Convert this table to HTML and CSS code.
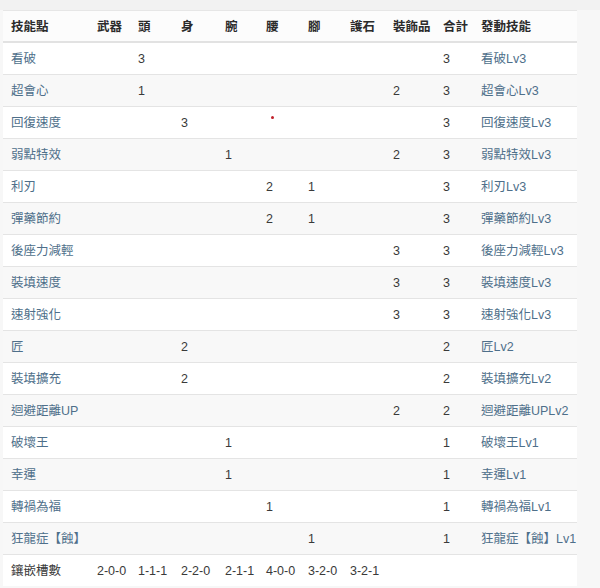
FILE: index.html
```html
<!DOCTYPE html>
<html lang="zh-Hant">
<head>
<meta charset="utf-8">
<title>技能點</title>
<link rel="stylesheet" href="styles.css">
</head>
<body>
<div class="page">
  <table class="skills">
    <colgroup>
      <col class="c-name"><col class="c-w"><col class="c-h"><col class="c-b"><col class="c-a"><col class="c-wa"><col class="c-l"><col class="c-ch"><col class="c-d"><col class="c-t"><col class="c-s">
    </colgroup>
    <thead>
      <tr><th>技能點</th><th>武器</th><th>頭</th><th>身</th><th>腕</th><th>腰</th><th>腳</th><th>護石</th><th>裝飾品</th><th>合計</th><th>發動技能</th></tr>
    </thead>
    <tbody>
      <tr><td class="lnk">看破</td><td></td><td>3</td><td></td><td></td><td></td><td></td><td></td><td></td><td>3</td><td class="lnk">看破Lv3</td></tr>
      <tr><td class="lnk">超會心</td><td></td><td>1</td><td></td><td></td><td></td><td></td><td></td><td>2</td><td>3</td><td class="lnk">超會心Lv3</td></tr>
      <tr><td class="lnk">回復速度</td><td></td><td></td><td>3</td><td></td><td class="dotcell"><span class="dot"></span></td><td></td><td></td><td></td><td>3</td><td class="lnk">回復速度Lv3</td></tr>
      <tr><td class="lnk">弱點特效</td><td></td><td></td><td></td><td>1</td><td></td><td></td><td></td><td>2</td><td>3</td><td class="lnk">弱點特效Lv3</td></tr>
      <tr><td class="lnk">利刃</td><td></td><td></td><td></td><td></td><td>2</td><td>1</td><td></td><td></td><td>3</td><td class="lnk">利刃Lv3</td></tr>
      <tr><td class="lnk">彈藥節約</td><td></td><td></td><td></td><td></td><td>2</td><td>1</td><td></td><td></td><td>3</td><td class="lnk">彈藥節約Lv3</td></tr>
      <tr><td class="lnk">後座力減輕</td><td></td><td></td><td></td><td></td><td></td><td></td><td></td><td>3</td><td>3</td><td class="lnk">後座力減輕Lv3</td></tr>
      <tr><td class="lnk">裝填速度</td><td></td><td></td><td></td><td></td><td></td><td></td><td></td><td>3</td><td>3</td><td class="lnk">裝填速度Lv3</td></tr>
      <tr><td class="lnk">速射強化</td><td></td><td></td><td></td><td></td><td></td><td></td><td></td><td>3</td><td>3</td><td class="lnk">速射強化Lv3</td></tr>
      <tr><td class="lnk">匠</td><td></td><td></td><td>2</td><td></td><td></td><td></td><td></td><td></td><td>2</td><td class="lnk">匠Lv2</td></tr>
      <tr><td class="lnk">裝填擴充</td><td></td><td></td><td>2</td><td></td><td></td><td></td><td></td><td></td><td>2</td><td class="lnk">裝填擴充Lv2</td></tr>
      <tr><td class="lnk">迴避距離UP</td><td></td><td></td><td></td><td></td><td></td><td></td><td></td><td>2</td><td>2</td><td class="lnk">迴避距離UPLv2</td></tr>
      <tr><td class="lnk">破壞王</td><td></td><td></td><td></td><td>1</td><td></td><td></td><td></td><td></td><td>1</td><td class="lnk">破壞王Lv1</td></tr>
      <tr><td class="lnk">幸運</td><td></td><td></td><td></td><td>1</td><td></td><td></td><td></td><td></td><td>1</td><td class="lnk">幸運Lv1</td></tr>
      <tr><td class="lnk">轉禍為福</td><td></td><td></td><td></td><td></td><td>1</td><td></td><td></td><td></td><td>1</td><td class="lnk">轉禍為福Lv1</td></tr>
      <tr><td class="lnk">狂龍症【蝕】</td><td></td><td></td><td></td><td></td><td></td><td>1</td><td></td><td></td><td>1</td><td class="lnk">狂龍症【蝕】Lv1</td></tr>
      <tr><td>鑲嵌槽數</td><td>2-0-0</td><td>1-1-1</td><td>2-2-0</td><td>2-1-1</td><td>4-0-0</td><td>3-2-0</td><td>3-2-1</td><td></td><td></td><td></td></tr>
    </tbody>
  </table>
</div>
</body>
</html>
```

FILE: styles.css
```css
html, body {
  margin: 0;
  padding: 0;
  background: #f7f7f7;
}
body {
  font-family: "Liberation Sans", "Noto Sans CJK TC", sans-serif;
  font-size: 12.5px;
  color: #3a3a3a;
}
.page {
  padding: 10px 0 0 3px;
  background: linear-gradient(#f2f2f2 0, #f2f2f2 10px, #f7f7f7 10px);
}
.skills {
  width: 574px;
  border-collapse: collapse;
  table-layout: fixed;
  background: #fff;
  border-top: 1px solid #e6e6e6;
}
.c-name { width: 86px; }
.c-w { width: 41px; }
.c-h { width: 43px; }
.c-b { width: 44px; }
.c-a { width: 41px; }
.c-wa { width: 42px; }
.c-l { width: 42px; }
.c-ch { width: 43px; }
.c-d { width: 50px; }
.c-t { width: 38px; }
.c-s { width: 104px; }
.skills th,
.skills td {
  text-align: left;
  padding: 8px 0 7px 8px;
  height: 16px;
  line-height: 16px;
  white-space: nowrap;
  overflow: visible;
}
.skills th {
  font-weight: 700;
  color: #2b2b2b;
  background: #fcfcfc;
  border-bottom: 2px solid #e2e2e2;
  padding-top: 8px;
  padding-bottom: 6px;
}
.skills td {
  border-bottom: 1px solid #e4e4e4;
}
.skills tbody tr:nth-child(even) td {
  background: #f8f8f8;
}
.skills tbody tr:last-child td {
  border-bottom: none;
}
.lnk {
  color: #4e6f8a;
}
.dotcell {
  position: relative;
}
.dot {
  position: absolute;
  left: 13px;
  top: 9px;
  width: 3px;
  height: 3px;
  border-radius: 50%;
  background: #c0202a;
}
```
